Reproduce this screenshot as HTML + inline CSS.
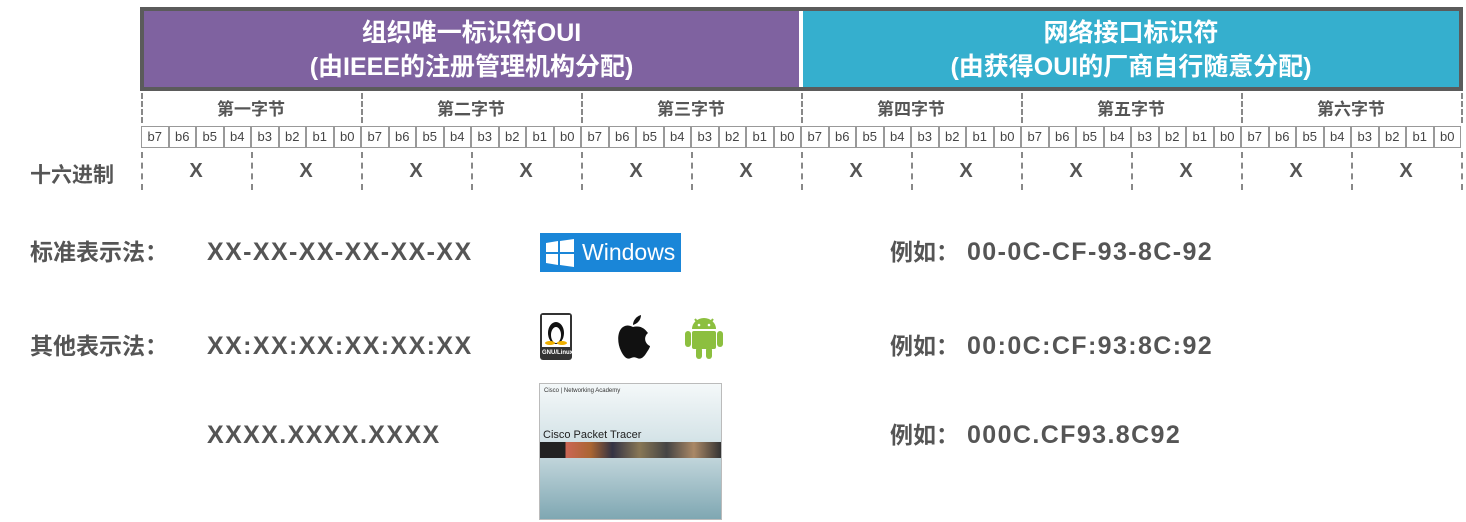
<!DOCTYPE html><html><head><meta charset="utf-8"><style>
body{margin:0;width:1466px;height:522px;background:#fff;position:relative;overflow:hidden;font-family:"Liberation Sans","Noto Sans CJK SC",sans-serif;color:#555;}
.a{position:absolute}
.box{left:140px;top:7px;width:1315px;height:76px;border:4px solid #5b5b5b;}
.p{left:0;top:0;width:655px;height:76px;background:#7f62a0;}
.t{left:659px;top:0;width:656px;height:76px;background:#35afce;}
.p div,.t div{color:#fff;font-weight:bold;font-size:25px;text-align:center;line-height:34px;}
.vd{border-left:2px dashed #888;width:0}
.bh{font-weight:bold;font-size:17px;text-align:center;width:220px;top:95px;}
.bit{top:126px;height:20px;width:25.5px;border:1px solid #999;font-size:13px;text-align:center;line-height:20px;color:#444;}
.x{font-weight:bold;font-size:20px;width:110px;text-align:center;top:160px;}
.lbl{font-weight:bold;font-size:25px;color:#555;letter-spacing:1.4px;line-height:30px}
.cn{font-weight:bold;font-size:23px;color:#555;line-height:30px}
</style></head><body>
<div class="a box"><div class="a p"><div style="margin-top:5px">组织唯一标识符OUI</div><div>(由IEEE的注册管理机构分配)</div></div>
<div class="a t"><div style="margin-top:5px">网络接口标识符</div><div>(由获得OUI的厂商自行随意分配)</div></div></div>
<div id="g"></div>
<script>
var h='',names=['第一字节','第二字节','第三字节','第四字节','第五字节','第六字节'];
for(var i=0;i<6;i++){var x=141+220*i;
h+='<div class="a bh" style="left:'+x+'px">'+names[i]+'</div>';
for(var j=0;j<8;j++)h+='<div class="a bit" style="left:'+(x+27.5*j)+'px">b'+(7-j)+'</div>';
h+='<div class="a x" style="left:'+x+'px">X</div><div class="a x" style="left:'+(x+110)+'px">X</div>';}
for(var k=0;k<7;k++){var x=141+220*k;h+='<div class="a vd" style="left:'+x+'px;top:93px;height:30px"></div><div class="a vd" style="left:'+x+'px;top:152px;height:38px"></div>';if(k<6)h+='<div class="a vd" style="left:'+(x+110)+'px;top:152px;height:38px"></div>';}
document.getElementById('g').innerHTML=h;
</script>
<div class="a" style="left:30px;top:159px;font-weight:bold;font-size:21px">十六进制</div>
<div class="a cn" style="left:30px;top:237px">标准表示法：</div>
<div class="a lbl" style="left:207px;top:237px">XX-XX-XX-XX-XX-XX</div>
<div class="a cn" style="left:30px;top:331px">其他表示法：</div>
<div class="a lbl" style="left:207px;top:331px">XX:XX:XX:XX:XX:XX</div>
<div class="a lbl" style="left:207px;top:420px">XXXX.XXXX.XXXX</div>
<div class="a cn" style="left:890px;top:237px">例如：</div><div class="a lbl" style="left:967px;top:237px">00-0C-CF-93-8C-92</div>
<div class="a cn" style="left:890px;top:331px">例如：</div><div class="a lbl" style="left:967px;top:331px">00:0C:CF:93:8C:92</div>
<div class="a cn" style="left:890px;top:420px">例如：</div><div class="a lbl" style="left:967px;top:420px">000C.CF93.8C92</div>
<div class="a" style="left:540px;top:233px;width:141px;height:39px;background:#1a86d8;color:#fff;font-size:23px;line-height:39px">
<svg class="a" style="left:6px;top:6px" width="28" height="28"><path d="M0 4L12 2V13H0ZM14 2L28 0V13H14ZM0 15H12V26L0 24ZM14 15H28V28L14 26Z" fill="#fff"/></svg>
<span style="position:absolute;left:42px">Windows</span></div>
<div class="a" style="left:540px;top:313px;width:32px;height:47px;background:#333;border-radius:3px;overflow:hidden">
<div class="a" style="left:2px;top:2px;width:28px;height:32px;background:#fff"></div>
<svg class="a" style="left:5px;top:4px" width="22" height="28"><ellipse cx="11" cy="16" rx="8" ry="11" fill="#111"/><ellipse cx="11" cy="18" rx="5" ry="8" fill="#fff"/><ellipse cx="5" cy="26" rx="5" ry="2" fill="#f0b000"/><ellipse cx="17" cy="26" rx="5" ry="2" fill="#f0b000"/></svg>
<div class="a" style="left:2px;top:37px;font-size:6px;color:#fff;font-weight:bold">GNU/Linux</div></div>
<svg class="a" style="left:612px;top:313px" width="42" height="48"><path d="M21 14C17 12 14 12 11 14C5 18 5 30 9 38C12 44 15 47 19 45C21 44 23 44 25 45C29 47 32 44 35 39C37 36 38 34 38 33C33 31 31 24 36 20C33 16 29 12 21 14Z" fill="#111"/><path d="M21 12C21 7 25 3 29 2C29 7 25 11 21 12Z" fill="#111"/></svg>
<svg class="a" style="left:684px;top:313px" width="40" height="46"><path d="M8 16A12 11 0 0 1 32 16Z" fill="#8cbf3f"/><path d="M11 6L14 10M29 6L26 10" stroke="#8cbf3f" stroke-width="2"/><rect x="8" y="18" width="24" height="18" rx="2" fill="#8cbf3f"/><rect x="1" y="18" width="6" height="16" rx="3" fill="#8cbf3f"/><rect x="33" y="18" width="6" height="16" rx="3" fill="#8cbf3f"/><rect x="12" y="34" width="6" height="12" rx="3" fill="#8cbf3f"/><rect x="22" y="34" width="6" height="12" rx="3" fill="#8cbf3f"/><circle cx="15" cy="12" r="1.3" fill="#fff"/><circle cx="25" cy="12" r="1.3" fill="#fff"/></svg>
<div class="a" style="left:539px;top:383px;width:181px;height:135px;border:1px solid #bbb;background:linear-gradient(#f4f8f9,#d6e4e8 40%,#7fa7b2)">
<div class="a" style="left:4px;top:4px;font-size:6px;color:#333">Cisco | Networking Academy</div>
<div class="a" style="left:3px;top:45px;font-size:11px;color:#222">Cisco Packet Tracer</div>
<div class="a" style="left:0;top:58px;width:181px;height:16px;background:linear-gradient(90deg,#222 14%,#c65 14%,#a63 28%,#334 40%,#875 55%,#444 70%,#a86 85%,#333)"></div>
</div>
</body></html>
